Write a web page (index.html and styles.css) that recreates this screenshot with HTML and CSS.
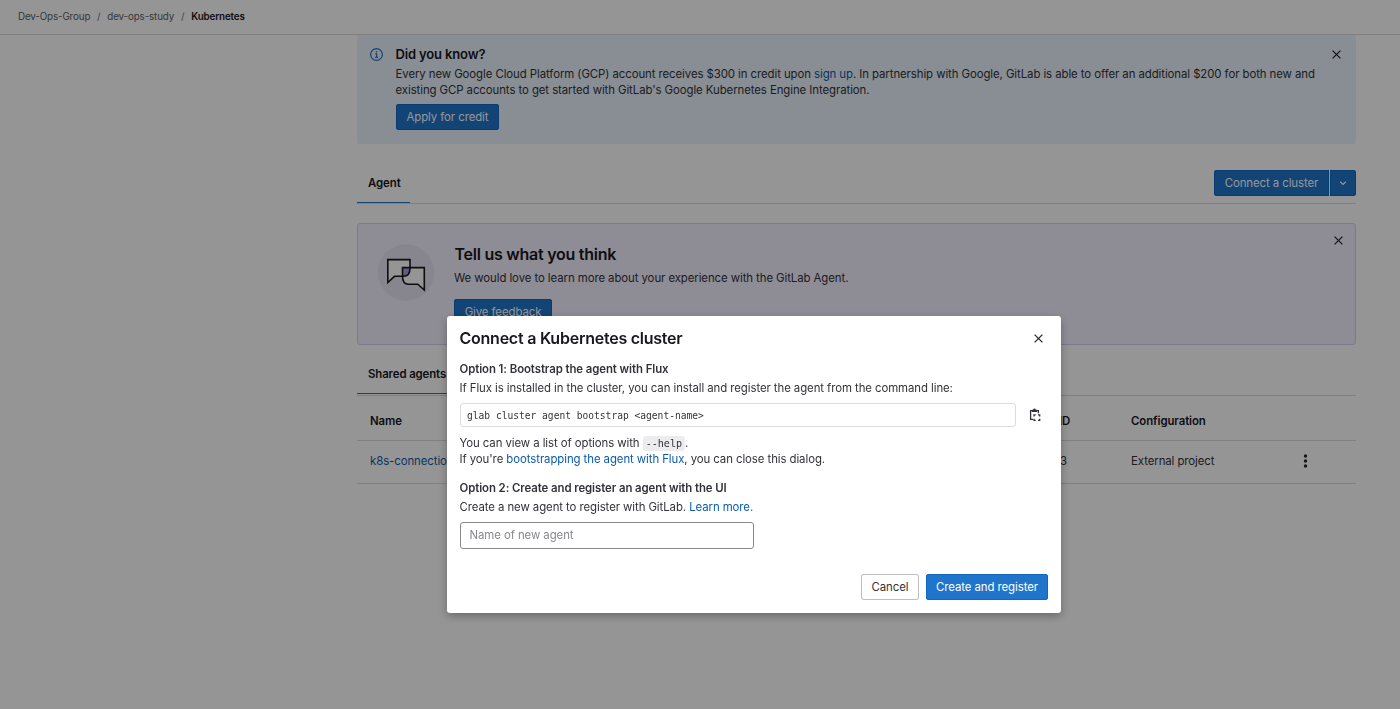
FILE: index.html
```
<!DOCTYPE html>
<html lang="en">
<head>
<meta charset="utf-8">
<title>Kubernetes</title>
<link rel="stylesheet" href="styles.css">
</head>
<body>
<header class="topbar">
  <a class="crumb">Dev-Ops-Group</a><span class="sep">/</span><a class="crumb">dev-ops-study</a><span class="sep">/</span><b class="crumb-current">Kubernetes</b>
</header>
<main class="content">
  <section class="alert">
    <svg class="info" viewBox="0 0 16 16" width="13" height="13"><circle cx="8" cy="8" r="7.2" fill="none" stroke="#1f75cb" stroke-width="1.5"/><circle cx="8" cy="4.7" r="1" fill="#1f75cb"/><path d="M6.4 7.2H8.2V11.4M6.2 11.5H10" fill="none" stroke="#1f75cb" stroke-width="1.5"/></svg>
    <div class="alert-body">
      <h2 class="alert-title">Did you know?</h2>
      <p class="alert-text">Every new Google Cloud Platform (GCP) account receives $300 in credit upon <a class="link">sign up</a>. In partnership with Google, GitLab is able to offer an additional $200 for both new and<br>existing GCP accounts to get started with GitLab's Google Kubernetes Engine Integration.</p>
      <button class="btn btn-primary btn-credit">Apply for credit</button>
    </div>
    <svg class="close" viewBox="0 0 9 9" width="9" height="9"><path d="M.6.6 8.4 8.4M8.4.6.6 8.4"/></svg>
  </section>
  <div class="tabs">
    <div class="tab tab-agent">Agent</div>
    <div class="split">
      <button class="btn btn-primary btn-connect">Connect a cluster</button>
      <button class="btn btn-primary btn-caret"><svg viewBox="0 0 8 8" width="8" height="8"><path d="M1.2 2.7 4 5.4 6.8 2.7" fill="none" stroke="currentColor" stroke-width="1.2"/></svg></button>
    </div>
  </div>
  <section class="banner">
    <svg class="chat" viewBox="0 0 57 57" width="57" height="57">
      <circle cx="28" cy="28.5" r="28.2" fill="#e7e4f2"/>
      <path d="M9.8 15.6H32V24Q32 32.3 25.5 32.3H16.5L9.8 38.5Z" fill="#fff"/>
      <path d="M24.5 23.6H46.3V46L39.8 40.2H30.5Q24.5 40.2 24.5 32.3Z" fill="#fff"/>
      <path d="M24.5 23.6H32Q32 31.5 25.5 32.3H24.5Z" fill="#a99bd6"/>
      <path d="M9.8 15.6H32V24Q32 32.3 25.5 32.3H16.5L9.8 38.5ZM24.5 23.6H46.3V46L39.8 40.2H30.5Q24.5 40.2 24.5 32.3Z" fill="none" stroke="#18171d" stroke-width="1.6"/>
    </svg>
    <div class="banner-body">
      <h2 class="banner-title">Tell us what you think</h2>
      <p class="banner-text">We would love to learn more about your experience with the GitLab Agent.</p>
      <button class="btn btn-primary btn-feedback">Give feedback</button>
    </div>
    <svg class="close" viewBox="0 0 9 9" width="9" height="9"><path d="M.6.6 8.4 8.4M8.4.6.6 8.4"/></svg>
  </section>
  <div class="subtabs"><div class="tab tab-shared">Shared agents</div></div>
  <div class="row row-head"><span>Name</span><span>ID</span><span>Configuration</span><span></span></div>
  <div class="row row-item"><a class="link">k8s-connection</a><span class="agent-id">3</span><span>External project</span>
    <svg class="kebab" viewBox="0 0 5 14" width="5" height="14"><circle cx="2.5" cy="2" r="1.7"/><circle cx="2.5" cy="7" r="1.7"/><circle cx="2.5" cy="12" r="1.7"/></svg>
  </div>
</main>
<div class="backdrop">
  <div class="modal" role="dialog">
    <div class="modal-head">
      <h2 class="modal-title">Connect a Kubernetes cluster</h2>
      <svg class="close" viewBox="0 0 9 9" width="9" height="9"><path d="M.6.6 8.4 8.4M8.4.6.6 8.4"/></svg>
    </div>
    <h3 class="option option-1">Option 1: Bootstrap the agent with Flux</h3>
    <p class="copy intro">If Flux is installed in the cluster, you can install and register the agent from the command line:</p>
    <div class="command">
      <div class="command-box">glab cluster agent bootstrap &lt;agent-name&gt;</div>
      <svg class="paste" viewBox="0 0 12 14" width="12" height="14"><path d="M4 11.4H1.6V2.6H3M8 2.6H9.4V5.2" fill="none" stroke="#333238" stroke-width="1.3"/><path d="M3 4V1.8H4.2A1.3 1.3 0 0 1 6.8 1.8H8V4Z" fill="#333238"/><path d="M5 8.4V6.9H6.7M9 6.9H10.7V8.4M10.7 10.8V12.4H9M6.7 12.4H5V10.8" fill="none" stroke="#333238" stroke-width="1.3"/></svg>
    </div>
    <p class="copy help">You can view a list of options with <code class="code">--help</code>.</p>
    <p class="copy flux">If you're <a class="link">bootstrapping the agent with Flux</a>, you can close this dialog.</p>
    <h3 class="option option-2">Option 2: Create and register an agent with the UI</h3>
    <p class="copy create">Create a new agent to register with GitLab. <a class="link">Learn more.</a></p>
    <input class="agent-input" placeholder="Name of new agent">
    <div class="modal-foot">
      <button class="btn btn-default">Cancel</button>
      <button class="btn btn-primary btn-register">Create and register</button>
    </div>
  </div>
</div>
</body>
</html>
```
FILE: styles.css
```
* { box-sizing: border-box; }
body {
  margin: 0;
  height: 709px;
  overflow: hidden;
  background: #fff;
  color: #333238;
  font: 11.4px/16px Inter, "Liberation Sans", sans-serif;
  letter-spacing: -.075px;
}
h2, h3, p { margin: 0; }
h2, h3 { color: #18171d; font-weight: 600; }
.link { color: #0b5cad; }
.close { fill: none; stroke: #28272d; stroke-width: 1.3; flex: none; }
.topbar {
  display: flex;
  align-items: center;
  height: 35px;
  padding: 0 18px;
  border-bottom: 1px solid #dcdcde;
  font-size: 9.8px;
  letter-spacing: -.12px;
}
.crumb { color: #626168; }
.sep { width: 17px; text-align: center; color: #737278; }
.crumb-current { color: #18171d; font-weight: 600; }
.content { width: 999px; margin-left: 357px; }
.alert {
  display: flex;
  height: 109px;
  padding: 11px 15px 0 13px;
  border-radius: 3px;
  background: #e9f3fc;
}
.info { margin: 2px 12.5px 0 0; flex: none; }
.alert .close { margin: 4px 0 0; }
.alert-body { flex: 1; white-space: nowrap; }
.alert-title { font-size: 13px; line-height: 17px; letter-spacing: -.15px; }
.alert-text { margin-top: 3px; }
.btn {
  height: 26px;
  padding: 0;
  border: 0;
  border-radius: 3px;
  font: 11.4px/26px Inter, "Liberation Sans", sans-serif;
  letter-spacing: -.075px;
  text-align: center;
  white-space: nowrap;
}
.btn-primary { background: #1f75cb; color: #fff; box-shadow: inset 0 0 0 1px #1068bf; }
.btn-credit { display: block; width: 103px; margin: 6px 0 0 .5px; }
.tabs {
  display: flex;
  justify-content: space-between;
  height: 41px;
  margin-top: 19px;
  border-bottom: 1px solid #dcdcde;
}
.tab { color: #18171d; font-weight: 600; border-bottom: 1px solid #1f75cb; padding-left: 11px; }
.tab-agent { width: 53px; height: 40px; line-height: 41px; }
.split { display: flex; gap: 1px; padding-top: 7px; }
.btn-connect { width: 115px; border-radius: 3px 0 0 3px; }
.btn-caret { width: 26px; border-radius: 0 3px 3px 0; }
.banner {
  display: flex;
  height: 122px;
  margin-top: 19px;
  padding: 20px 12px 0 20px;
  border: 1px solid #d4cdf2;
  border-radius: 3px;
  background: #f4f0ff;
}
.banner-body { flex: 1; padding-left: 19px; }
.banner .close { margin-top: -8px; }
.banner-title { font-size: 16px; line-height: 21px; letter-spacing: -.25px; padding-left: .5px; }
.banner-text { margin-top: 5px; }
.btn-feedback { width: 98px; margin-top: 13px; }
.subtabs { height: 51px; padding-top: 1px; border-bottom: 1px solid #dcdcde; }
.tab-shared { width: 102px; height: 48px; line-height: 57px; letter-spacing: -.11px; }
.row {
  display: grid;
  grid-template-columns: 689px 72px 172px 66px;
  align-items: center;
  padding-left: 13px;
  border-bottom: 1px solid #dcdcde;
}
.row-head { height: 45px; padding-top: 6px; color: #18171d; font-weight: 600; }
.row-item { height: 43px; padding-bottom: 3px; }
.agent-id { padding-left: 1px; }
.kebab { fill: #28272d; }
.backdrop { position: fixed; inset: 0; background: rgba(0, 0, 0, .415); }
.modal {
  position: absolute;
  left: 447px;
  top: 316px;
  width: 614px;
  height: 297px;
  padding: 12px 13px 13px 12.5px;
  border-radius: 3px;
  background: #fff;
  box-shadow: 0 3px 10px rgba(0, 0, 0, .3);
  display: flex;
  flex-direction: column;
}
.modal-head { display: flex; justify-content: space-between; align-items: center; height: 21px; padding-right: 5px; }
.modal-title { font-size: 16px; line-height: 21px; letter-spacing: -.24px; }
.option { color: #333238; font-size: 11.4px; line-height: 16px; }
.option-1 { margin-top: 12px; }
.copy { margin-top: 3px; white-space: nowrap; }
.command { display: flex; align-items: center; gap: 13px; margin: 7px 0 0 .5px; }
.command-box {
  width: 556px;
  height: 24px;
  padding-left: 6px;
  border: 1px solid #dcdcde;
  border-radius: 3px;
  font: 9.6px/23px "DejaVu Sans Mono", monospace;
  letter-spacing: 0;
}
.help { margin-top: 8px; }
.flux { margin-top: 0; }
.code { padding: 2px 3px; border-radius: 3px; background: #ececef; font: 10.1px "DejaVu Sans Mono", monospace; letter-spacing: 0; }
.option-2 { margin-top: 13px; }
.agent-input {
  width: 294px;
  height: 27px;
  margin: 7px 0 0 .5px;
  padding: 0 8.5px 2px;
  border: 1px solid #89888d;
  border-radius: 3px;
  font: 11.4px Inter, "Liberation Sans", sans-serif;
  letter-spacing: -.075px;
}
.agent-input::placeholder { color: #89888d; }
.modal-foot { display: flex; justify-content: flex-end; gap: 7px; margin-top: auto; }
.btn-default { width: 58px; background: #fff; color: #333238; box-shadow: inset 0 0 0 1px #bfbfc3; }
.btn-register { width: 122px; }
```
